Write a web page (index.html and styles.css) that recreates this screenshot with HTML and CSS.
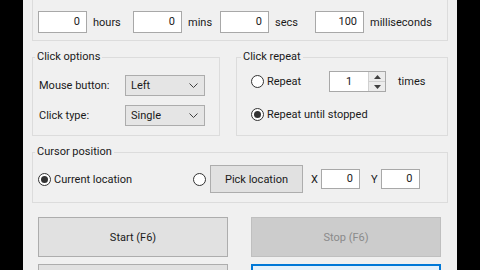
FILE: index.html
```html
<!DOCTYPE html>
<html lang="en">
<head>
    <meta charset="UTF-8">
    <meta name="viewport" content="width=device-width, initial-scale=1.0">
    <title>Auto Clicker</title>
    <link rel="stylesheet" href="styles.css">
</head>
<body>
    <div class="window">
        <fieldset class="group group-interval">
            <legend>Click interval</legend>
            <div class="interval-row">
                <span class="field"><span class="textbox tb-time">0</span><span class="unit">hours</span></span>
                <span class="field"><span class="textbox tb-time">0</span><span class="unit">mins</span></span>
                <span class="field"><span class="textbox tb-time">0</span><span class="unit">secs</span></span>
                <span class="field"><span class="textbox tb-time">100</span><span class="unit">milliseconds</span></span>
            </div>
        </fieldset>

        <div class="options-row">
            <fieldset class="group group-options">
                <legend>Click options</legend>
                <div class="option-grid">
                    <span class="label">Mouse button:</span>
                    <span class="combo">Left<svg class="chev" width="9" height="5" viewBox="0 0 9 5"><path d="M0.5 0.5 L4.5 4.5 L8.5 0.5" fill="none" stroke="#404040" stroke-width="1"/></svg></span>
                    <span class="label">Click type:</span>
                    <span class="combo">Single<svg class="chev" width="9" height="5" viewBox="0 0 9 5"><path d="M0.5 0.5 L4.5 4.5 L8.5 0.5" fill="none" stroke="#404040" stroke-width="1"/></svg></span>
                </div>
            </fieldset>

            <fieldset class="group group-repeat">
                <legend>Click repeat</legend>
                <div class="repeat-body">
                    <div class="repeat-row">
                        <span class="radio-label repeat-label"><span class="radio"></span>Repeat</span>
                        <span class="spinner">
                            <span class="spin-value">1</span>
                            <span class="spin-btns">
                                <span class="spin-btn"><svg width="7" height="4" viewBox="0 0 7 4"><path d="M0 4 L3.5 0 L7 4 Z" fill="#404040"/></svg></span>
                                <span class="spin-btn"><svg width="7" height="4" viewBox="0 0 7 4"><path d="M0 0 L3.5 4 L7 0 Z" fill="#404040"/></svg></span>
                            </span>
                        </span>
                        <span class="times">times</span>
                    </div>
                    <div class="repeat-row">
                        <span class="radio-label"><span class="radio checked"></span>Repeat until stopped</span>
                    </div>
                </div>
            </fieldset>
        </div>

        <fieldset class="group group-cursor">
            <legend>Cursor position</legend>
            <div class="cursor-row">
                <span class="radio-label current"><span class="radio checked"></span>Current location</span>
                <span class="radio pick-radio"></span>
                <span class="btn pick-btn">Pick location</span>
                <span class="axis">X</span>
                <span class="textbox tb-coord">0</span>
                <span class="axis axis-y">Y</span>
                <span class="textbox tb-coord">0</span>
            </div>
        </fieldset>

        <div class="button-row">
            <span class="btn big-btn">Start (F6)</span>
            <span class="btn big-btn disabled">Stop (F6)</span>
        </div>
        <div class="button-row second">
            <span class="btn big-btn">Hotkey setting</span>
            <span class="btn big-btn focused">Record &amp; Playback</span>
        </div>
    </div>
</body>
</html>
```

FILE: styles.css
```css
html, body {
    margin: 0;
    height: 100%;
    overflow: hidden;
}

body {
    background: #000;
    font-family: Roboto, "Liberation Sans", sans-serif;
    font-size: 11px;
    color: #1a1a1a;
}

.window {
    width: 425px;
    height: 300px;
    margin: -12px 0 0 23px;
    padding: 0 9px 0 0;
    background: #f0f0f0;
    display: flex;
    flex-direction: column;
}

/* group boxes */
.group {
    box-sizing: border-box;
    margin: 0 0 0 9px;
    padding: 0 0 0 2px;
    border: 1px solid #dcdcdc;
    min-width: 0;
}

.group legend {
    padding: 0 2px;
    margin-left: 2px;
    line-height: 14px;
    height: 14px;
}

.group-interval {
    padding: 9px 0 7px 5px;
}

.group-interval legend {
    margin-left: -1px;
}

.interval-row {
    display: flex;
    align-items: center;
    height: 22px;
}

.field {
    display: flex;
    align-items: center;
}

.unit {
    margin-left: 6px;
}

.field:nth-child(1) .unit { width: 40px; }
.field:nth-child(2) .unit { width: 32px; }
.field:nth-child(3) .unit { width: 40px; }

.textbox {
    box-sizing: border-box;
    background: #fff;
    border: 1px solid #a8a8a8;
    text-align: right;
    padding-right: 6px;
    line-height: 20px;
    height: 22px;
}

.tb-time {
    width: 49px;
}

/* options row */
.options-row {
    display: flex;
    margin-top: 9px;
}

.group-options {
    width: 188px;
    padding: 11px 0 9px 6px;
}

.group-options legend {
    margin-left: -4px;
}

.option-grid {
    display: grid;
    grid-template-columns: 86px 80px;
    grid-auto-rows: 21px;
    row-gap: 9px;
    align-items: center;
}

.combo {
    box-sizing: border-box;
    height: 21px;
    background: #e5e5e5;
    border: 1px solid #acacac;
    padding-left: 5px;
    display: flex;
    align-items: center;
    justify-content: space-between;
}

.chev {
    margin-right: 6px;
}

.group-repeat {
    flex: 1;
    margin-left: 16px;
    padding-bottom: 10px;
}

.repeat-body {
    padding: 7px 0 0 12px;
}

.repeat-row {
    display: flex;
    align-items: center;
    height: 21px;
}

.repeat-row + .repeat-row {
    margin-top: 12px;
}

.radio-label {
    display: flex;
    align-items: center;
}

.repeat-label {
    width: 78px;
}

.radio {
    box-sizing: border-box;
    width: 13px;
    height: 13px;
    border: 1px solid #333;
    border-radius: 50%;
    background: #fff;
    margin-right: 3px;
    display: inline-flex;
    align-items: center;
    justify-content: center;
    flex: none;
}

.radio.checked::after {
    content: "";
    width: 7px;
    height: 7px;
    border-radius: 50%;
    background: #333;
}

.spinner {
    box-sizing: border-box;
    width: 57px;
    height: 21px;
    border: 1px solid #a8a8a8;
    background: #fff;
    display: flex;
}

.spin-value {
    flex: 1;
    text-align: center;
    line-height: 19px;
}

.spin-btns {
    width: 16px;
    display: flex;
    flex-direction: column;
    border-left: 1px solid #d0d0d0;
}

.spin-btn {
    flex: 1;
    background: #ececec;
    display: flex;
    align-items: center;
    justify-content: center;
}

.spin-btn + .spin-btn {
    border-top: 1px solid #d0d0d0;
}

.times {
    margin-left: 12px;
}

/* cursor position */
.group-cursor {
    margin-top: 9px;
    padding: 6px 0 9px 5px;
}

.group-cursor legend {
    margin-left: -3px;
}

.cursor-row {
    display: flex;
    align-items: center;
    height: 28px;
}

.current {
    width: 155px;
}

.pick-radio {
    margin-right: 4px;
}

.btn {
    box-sizing: border-box;
    background: #e1e1e1;
    border: 1px solid #adadad;
    display: flex;
    align-items: center;
    justify-content: center;
}

.pick-btn {
    width: 93px;
    height: 28px;
}

.axis {
    margin: 0 3px 0 8px;
}

.axis-y {
    margin-left: 11px;
}

.tb-coord {
    width: 39px;
    height: 20px;
    line-height: 18px;
}

/* bottom buttons */
.button-row {
    display: flex;
    gap: 23px;
    margin: 14px 0 0 15px;
}

.button-row.second {
    margin-top: 7px;
}

.big-btn {
    width: 190px;
    height: 40px;
}

.big-btn.disabled {
    background: #cccccc;
    border-color: #bfbfbf;
    color: #8a8a8a;
}

.big-btn.focused {
    background: #e5f1fb;
    border: 2px solid #0078d7;
}
```
